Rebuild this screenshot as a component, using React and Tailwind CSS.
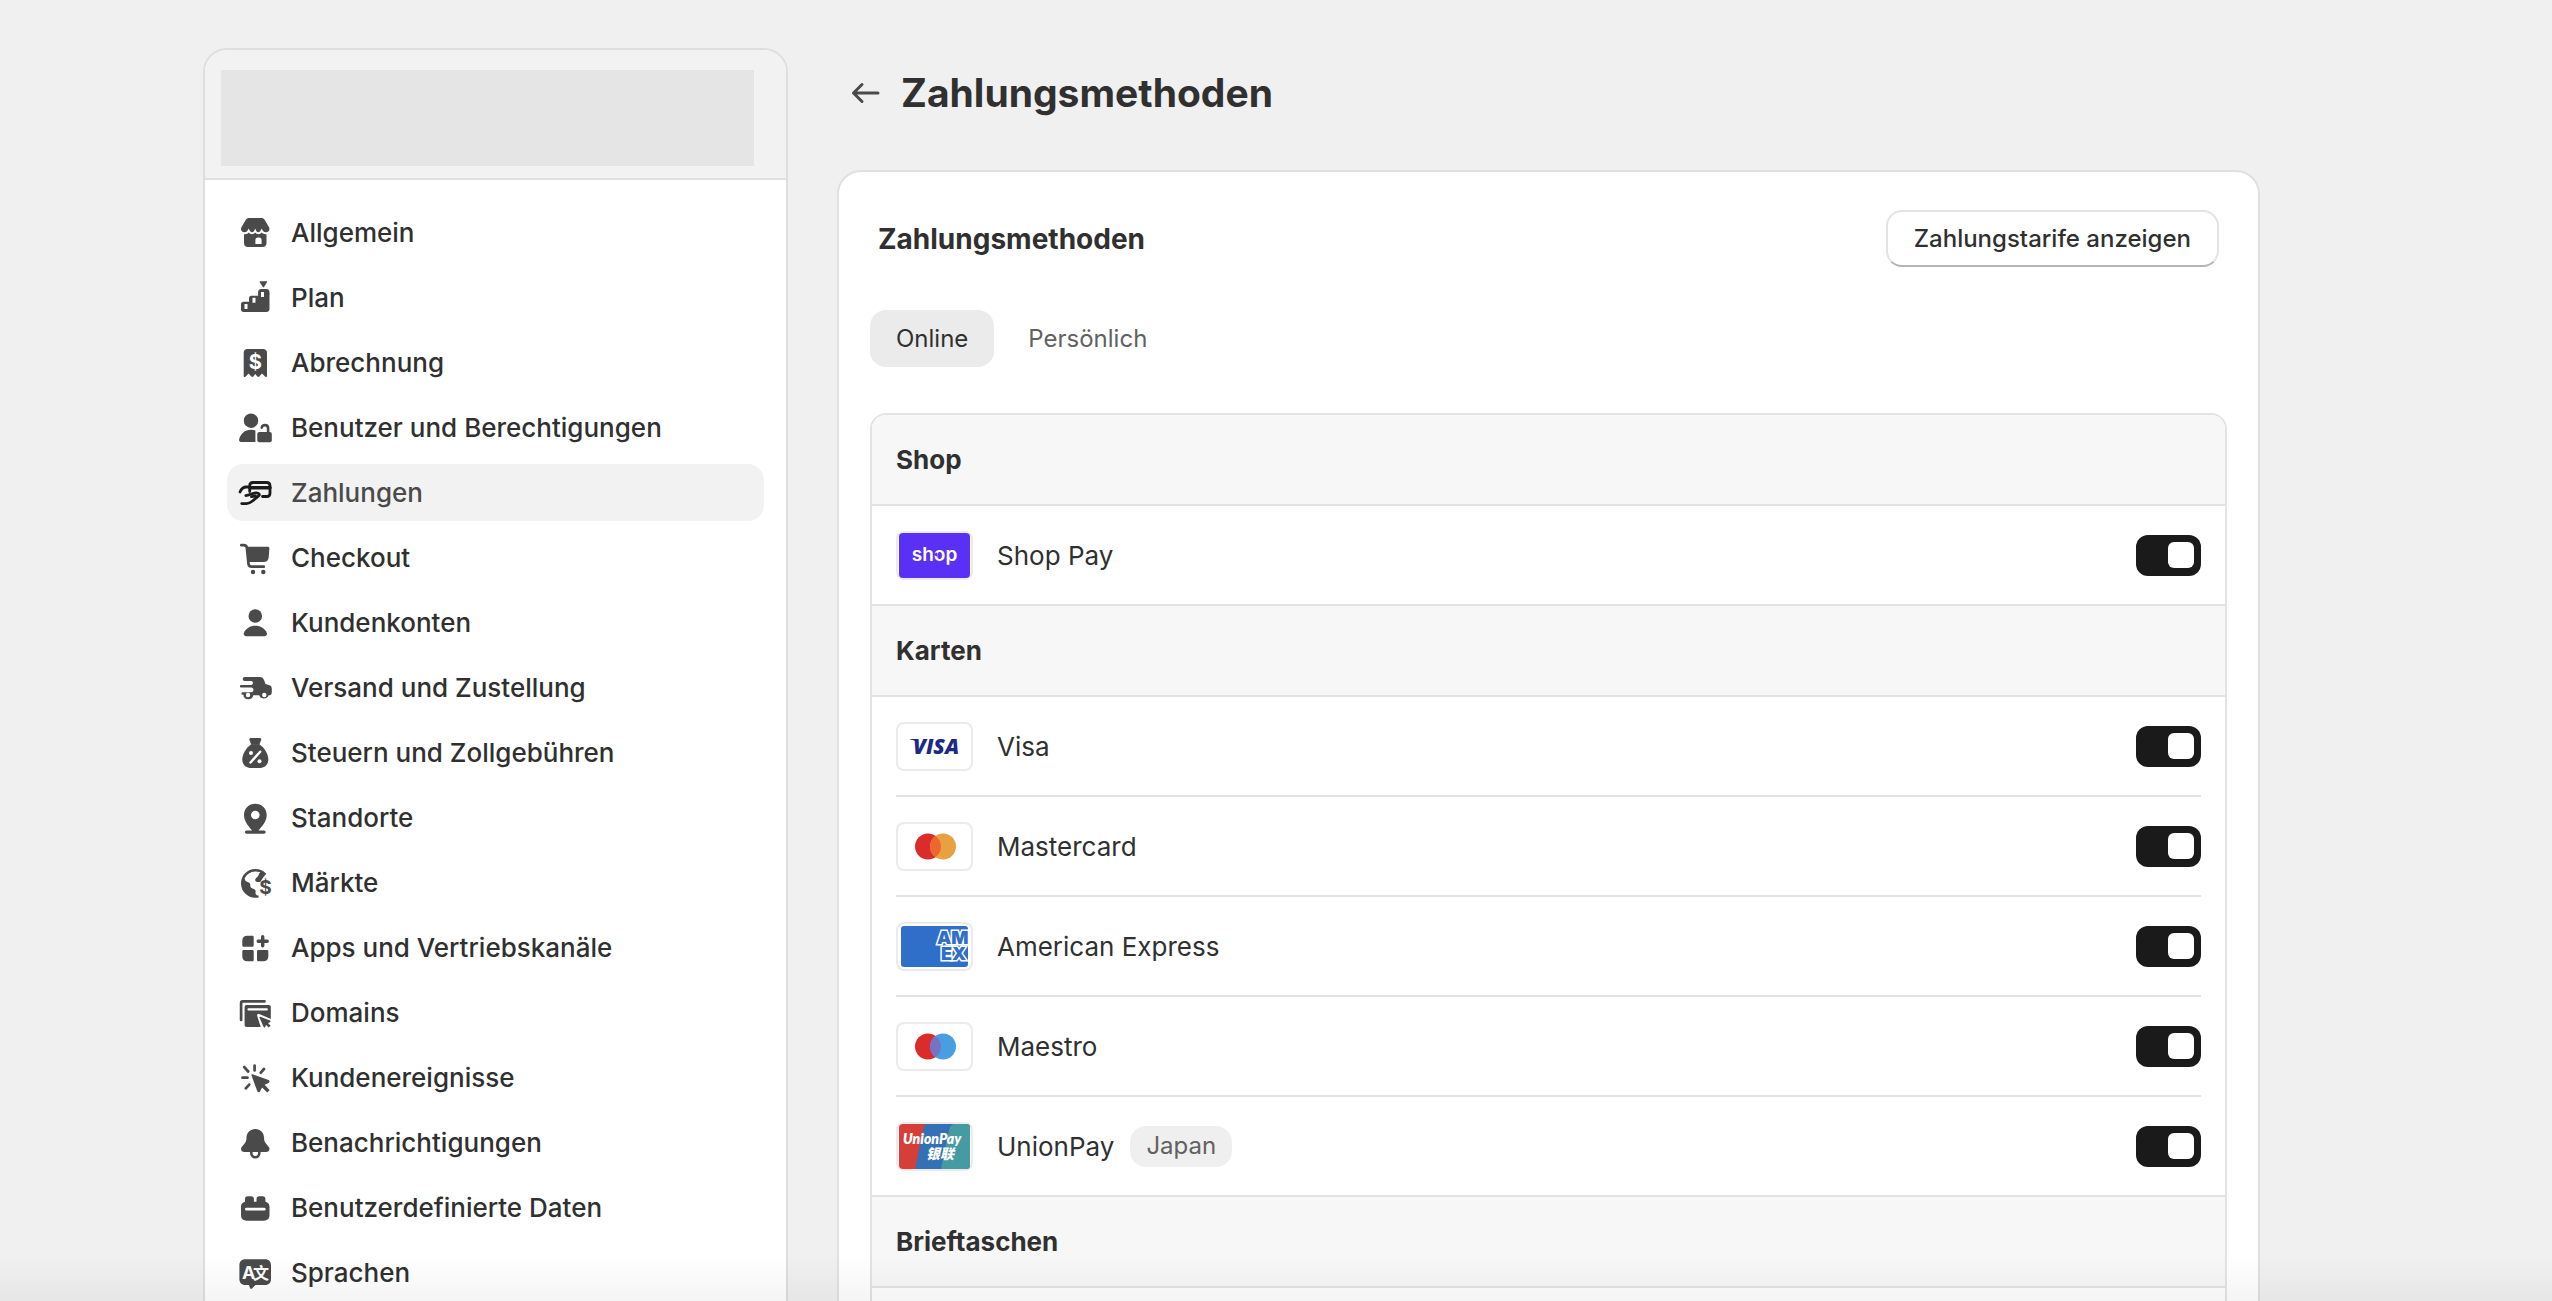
import { useState } from "react";
import clsx from "clsx";

const Icon = ({ children, className }) => (
  <svg
    viewBox="0 0 40 40"
    className={clsx("size-10 shrink-0", className)}
    fill="currentColor"
    aria-hidden="true"
  >
    {children}
  </svg>
);

const StoreIcon = () => (
  <Icon>
    <path d="M14 5h12.500c1.300 0 2.400.6 3.100 1.700l4.300 7.200c.4.700.6 1.300.6 2 0 1.900-1.500 3.300-3.500 3.300-2.400 0-3.300-1.400-4.300-3.700-.9 2.300-2 3.700-3.500 3.700s-2.200-1.400-3-3.700c-.8 2.300-1.600 3.700-3.100 3.700s-2.500-1.400-3.400-3.700c-1 2.300-2 3.700-4.300 3.700C7.400 19.200 6 17.800 6 15.900c0-.7.200-1.300.6-2l4.300-7.200C11.600 5.600 12.700 5 14 5Z" />
    <path
      fillRule="evenodd"
      d="M9 21.200c2.200.3 3.700-.4 4.700-1.600 1.800 2.200 4.700 2.200 6.500 0 1.800 2.200 4.700 2.200 6.500 0 1.200 1.200 2.700 1.900 4.800 1.600V30c0 2.500-1.500 4-4 4H13c-2.500 0-4-1.500-4-4v-8.800Zm14 3.300c-1.700 0-2.600 1-2.600 2.600V31h6.200v-3.900c0-1.600-1-2.600-2.600-2.600h-1Z"
    />
  </Icon>
);

const PlanIcon = () => (
  <Icon>
    <path d="M25.300 3.300h6.200c.5 0 .8.500.5.900l-3 4.800c-.3.400-.9.400-1.200 0l-3-4.800c-.3-.4 0-.9.500-.9Z" />
    <path
      fillRule="evenodd"
      d="M26.500 11h5c1.700 0 3 1.300 3 3v17c0 1.700-1.300 3-3 3H8.500C7 34 6 33 6 31.500v-5.300c0-1.500 1-2.500 2.500-2.500H14v-3.500c0-1.500 1-2.500 2.500-2.500h6.600V14c0-1.700 1.400-3 3.400-3ZM9.500 26v5h3v-5h-3Zm8-6.200v5h3v-5h-3ZM26 14v5h3v-5h-3Z"
    />
  </Icon>
);

const BillIcon = () => (
  <Icon>
    <path d="M12.500 6H28c2.400 0 4 1.600 4 4v23c0 1-1 1.400-1.700.7L27 30.500l-2.800 3c-.6.600-1.300.6-1.900 0l-2-2.500-2 2.500c-.6.600-1.300.6-1.900 0l-2.800-3-3.200 3.200c-.7.700-1.700.3-1.700-.7V10c0-2.400 1.400-4 3.800-4Z" />
    <text
      x="20.300"
      y="26"
      textAnchor="middle"
      className="fill-white font-['Inter',sans-serif] text-[20px] font-bold"
    >
      $
    </text>
  </Icon>
);

const UserLockIcon = () => (
  <Icon>
    <circle cx="16" cy="12.700" r="7.200" />
    <path d="M16 21.800c1.600 0 3.100.2 4.400.6V34H6c-1.300 0-2.200-1.100-1.900-2.300 1.200-5.800 5.900-9.900 11.900-9.900Z" />
    <rect x="22.300" y="24" width="14.500" height="10.200" rx="2" />
    <path
      d="M26.800 19.700c.2-1.600 1.400-2.600 3.100-2.600 1.900 0 3.200 1.200 3.200 3.100V25"
      fill="none"
      stroke="currentColor"
      strokeWidth="2.600"
      strokeLinecap="round"
    />
  </Icon>
);

const PaymentIcon = () => (
  <Icon className="text-[#1a1a1a]">
    <g
      fill="none"
      stroke="currentColor"
      strokeWidth="2.800"
      strokeLinecap="round"
      strokeLinejoin="round"
    >
      <path d="M14.700 18.500v-5.700c0-2 1.300-3.300 3.300-3.300h13.700c2 0 3.300 1.300 3.300 3.300v7.400c0 2-1.300 3.300-3.300 3.300h-4.200" />
      <path d="M15 14.700h20" strokeWidth="3.400" />
      <path d="M5 19c1.300-3.200 3.300-5 6.500-5h2" />
      <path d="M10.800 22.600c4 0 5.400-2.400 10.200-2.800 2.800-.2 4.400 1.800 2.400 3.400l-5.900 4.800c-2 1.600-3.500 2.600-6 2.600H6.700" />
      <path d="M16.500 23.700l4-.7" />
    </g>
  </Icon>
);

const CartIcon = () => (
  <Icon>
    <path d="M12 8.700h20.800c1 0 1.700.7 1.600 1.700l-.7 8.800c-.3 3.200-2 4.900-5.200 4.900H13.600L12 8.700Z" />
    <path
      d="M6.300 7.200h2.400c1.900 0 3 .9 3.200 2.700l1.600 15.900c.2 1.900 1.200 2.900 3.100 2.900h12.200"
      fill="none"
      stroke="currentColor"
      strokeWidth="2.700"
      strokeLinecap="round"
    />
    <circle cx="18" cy="34" r="2.200" />
    <circle cx="28.300" cy="34" r="2.200" />
  </Icon>
);

const PersonIcon = () => (
  <Icon>
    <circle cx="20.300" cy="13" r="6.800" />
    <path d="M20.300 22.700c5.200 0 9.700 2.700 11.500 7.200.6 1.700-.5 3.300-2.300 3.300H11.200c-1.800 0-2.900-1.600-2.300-3.300 1.800-4.500 6.200-7.200 11.400-7.200Z" />
  </Icon>
);

const TruckIcon = () => (
  <Icon>
    <path
      fillRule="evenodd"
      d="M9.700 9h14.800c2.700 0 3.800 1 4.700 3.500l1.300 3.600 3.300.9c2 .5 3 1.800 3 3.800v3.400c0 2-1 3.100-3 3.100h-.2a5 5 0 0 1-9.400 0h-5.900a5 5 0 0 1-9.900-.6H7.700a1.200 1.200 0 0 1 0-2.500h8.500c3 0 3-4.600 0-4.600H6.200a1.300 1.300 0 0 1 0-2.700H16c2.600 0 2.600-3.900 0-3.900H9.700a2 2 0 0 1 0-4ZM13 24.800a2.200 2.200 0 1 0 0 4.400 2.200 2.200 0 0 0 0-4.400Zm16.300 0a2.200 2.200 0 1 0 0 4.400 2.200 2.200 0 0 0 0-4.400Z"
    />
  </Icon>
);

const TaxIcon = () => (
  <Icon>
    <path d="M16 5h8.600c1.300 0 2 1 1.500 2.200l-1.800 4.600h-8L14.500 7.200C14 6 14.700 5 16 5Z" />
    <path d="M16.300 11.300h8c5.200 3.500 9 10 9 15.200 0 5.300-3.500 8.500-9 8.500h-8c-5.500 0-9-3.200-9-8.500 0-5.200 3.800-11.700 9-15.200Z" />
    <g stroke="white" fill="white">
      <path
        d="M15.500 29.500l9.700-10.800"
        strokeWidth="2.400"
        strokeLinecap="round"
      />
      <circle cx="16" cy="20" r="2" strokeWidth="0" />
      <circle cx="24.500" cy="28.300" r="2" strokeWidth="0" />
    </g>
  </Icon>
);

const LocationIcon = () => (
  <Icon>
    <path
      fillRule="evenodd"
      d="M20.300 5.700c6.400 0 11.400 4.800 11.400 11.200 0 6.200-4.500 11-8.200 15.500h5.500a1.700 1.700 0 0 1 0 3.400H11.600a1.700 1.700 0 0 1 0-3.400h5.500C13.400 27.900 9 23.100 9 16.900 9 10.500 13.900 5.700 20.300 5.700Zm0 7a4.300 4.300 0 1 0 0 8.600 4.300 4.300 0 0 0 0-8.600Z"
    />
  </Icon>
);

const MarketsIcon = () => (
  <Icon>
    <path
      fillRule="evenodd"
      d="M20.300 6c4.400 0 8.300 1.800 11 4.800l-2.600 3-3.500 5.300h-3c-1 0-2-.9-2-2 0-1.500 1.200-2.200 2.300-3.300 1.700-1.700 1-3 2.800-4.500-1.500-.6-3.200-.9-5-.9-4.800 0-8.900 2.900-10.700 7.200l.9 2.400c1 1 3.300.8 4.300 2.300 1 1.600 0 3.300 1.300 4.400 1.500 1.100 4.200 1 4.500 3.300.2 1.400-.6 2.200.3 3.200.6.800 1.500 1.500 2.700 1.300v2c-1 .2-2 .3-3.300.3A14.300 14.300 0 0 1 6 20.400C6 12.400 12.300 6 20.300 6Z"
    />
    <text
      x="30.600"
      y="31"
      textAnchor="middle"
      className="font-['Inter',sans-serif] text-[19px] font-bold"
    >
      $
    </text>
  </Icon>
);

const AppsIcon = () => (
  <Icon>
    <path d="M12.300 7.700h4.900c1 0 1.500.5 1.500 1.500v8c0 1-.5 1.500-1.500 1.500h-8.400c-1 0-1.500-.5-1.500-1.500v-4.500c0-3.200 1.800-5 5-5Z" />
    <path d="M8.800 22h8.400c1 0 1.500.5 1.500 1.500v8.300c0 1-.5 1.500-1.500 1.500h-4.900c-3.200 0-5-1.800-5-5v-4.800c0-1 .5-1.500 1.500-1.500Z" />
    <path d="M23.500 22h8.300c1 0 1.500.5 1.500 1.500v4.800c0 3.200-1.800 5-5 5h-4.800c-1 0-1.500-.5-1.500-1.500v-8.300c0-1 .5-1.500 1.500-1.500Z" />
    <path
      d="M27.700 8.700v9M23.200 13.200h9"
      stroke="currentColor"
      strokeWidth="3.400"
      strokeLinecap="round"
    />
  </Icon>
);

const DomainsIcon = () => (
  <Icon>
    <path
      d="M29.500 8.400H7.700c-1 0-1.600.6-1.600 1.600v17"
      fill="none"
      stroke="currentColor"
      strokeWidth="2.700"
      strokeLinecap="round"
    />
    <path d="M11.600 12h22.200c1.200 0 2 .8 2 2v18c0 1.200-.8 2-2 2H11.600c-1.200 0-2-.8-2-2V14c0-1.200.8-2 2-2Z" />
    <path
      d="M13.500 16.400h18.300"
      stroke="white"
      strokeWidth="2.200"
      strokeLinecap="round"
    />
    <path
      d="M23.600 22.400l4 12.600h9V27.800Z"
      fill="white"
      stroke="white"
      strokeWidth="3"
      strokeLinejoin="round"
    />
    <path d="M25.200 23.700l9.800 3.900c.8.300.8 1.300 0 1.600l-2 .9 2.600 2.700-1.800 1.800-2.700-2.700-1 2c-.4.800-1.400.7-1.600-.1l-4-9.300c-.2-.5.200-1 .7-.8Z" />
  </Icon>
);

const EventsIcon = () => (
  <Icon>
    <path d="M17.500 16.200l16 5.900c1.400.5 1.400 2.200.1 2.800l-3.900 1.900 4.900 5.400-2.300 2.200-5.200-5-2.100 4c-.6 1.200-2.300 1.100-2.700-.2l-5.800-15.700c-.3-.8.200-1.500 1-1.300Z" />
    <path
      d="M19.600 7.500v5M9.200 9l4 4.500M29 11l-3.200 3.700M7.500 19.700h5M14.200 26.600l-3.400 3.700"
      stroke="currentColor"
      strokeWidth="2.700"
      strokeLinecap="round"
      fill="none"
    />
  </Icon>
);

const BellIcon = () => (
  <Icon>
    <path d="M20.300 6c5 0 8.700 3.700 8.700 8.600 0 3.700 1 5.400 4 8.400 1 1 1.500 2 1.500 3 0 1.800-1.400 3-3.500 3H9.500C7.400 29 6 27.800 6 26c0-1 .5-2 1.500-3 3-3 4-4.700 4-8.400C11.500 9.700 15.300 6 20.300 6Z" />
    <path
      d="M16.300 28.500v1.600c0 2.400 1.700 4.200 4 4.200s4-1.800 4-4.200v-1.600"
      fill="none"
      stroke="currentColor"
      strokeWidth="2.600"
    />
  </Icon>
);

const DataIcon = () => (
  <Icon>
    <path d="M10 13.700v-2.600c0-1.800 1-2.800 2.700-2.800h3.500c1.700 0 2.700 1 2.700 2.800v2.600h2.600v-2.600c0-1.800 1-2.800 2.700-2.800h3.500c1.700 0 2.700 1 2.700 2.800v2.600c2.700.6 4.100 2.300 4.100 5v8.300c0 3.600-2.100 5.700-5.700 5.700H11.700C8.100 32.700 6 30.600 6 27v-8.300c0-2.700 1.400-4.400 4-5Z" />
    <path
      d="M11.400 21.200h17.800"
      stroke="white"
      strokeWidth="2.800"
      strokeLinecap="round"
    />
  </Icon>
);

const LanguageIcon = () => (
  <Icon>
    <path d="M10.400 6.300H30c3.800 0 6 2.200 6 6V26c0 3.800-2.200 6-6 6h-9.500l-3.300 3.300c-1 1-1.900.8-2.300-.5L14 32h-3.600c-3.800 0-6-2.200-6-6V12.300c0-3.800 2.200-6 6-6Z" />
    <text
      x="13.700"
      y="25.500"
      textAnchor="middle"
      className="fill-white font-['Inter',sans-serif] text-[18px] font-bold"
    >
      A
    </text>
    <text
      x="26"
      y="25.500"
      textAnchor="middle"
      className="fill-white font-['Noto_Sans_CJK_SC',sans-serif] text-[16px] font-bold"
    >
      文
    </text>
  </Icon>
);

const navItems = [
  { label: "Allgemein", icon: StoreIcon },
  { label: "Plan", icon: PlanIcon },
  { label: "Abrechnung", icon: BillIcon },
  { label: "Benutzer und Berechtigungen", icon: UserLockIcon },
  { label: "Zahlungen", icon: PaymentIcon, active: true },
  { label: "Checkout", icon: CartIcon },
  { label: "Kundenkonten", icon: PersonIcon },
  { label: "Versand und Zustellung", icon: TruckIcon },
  { label: "Steuern und Zollgebühren", icon: TaxIcon },
  { label: "Standorte", icon: LocationIcon },
  { label: "Märkte", icon: MarketsIcon },
  { label: "Apps und Vertriebskanäle", icon: AppsIcon },
  { label: "Domains", icon: DomainsIcon },
  { label: "Kundenereignisse", icon: EventsIcon },
  { label: "Benachrichtigungen", icon: BellIcon },
  { label: "Benutzerdefinierte Daten", icon: DataIcon },
  { label: "Sprachen", icon: LanguageIcon },
];

const Logo = ({ children }) => (
  <svg
    viewBox="0 0 77 49"
    className="h-[49px] w-[77px] shrink-0"
    aria-hidden="true"
  >
    <rect
      x="1"
      y="1"
      width="75"
      height="47"
      rx="7"
      fill="white"
      stroke="#ebebeb"
      strokeWidth="2"
    />
    {children}
  </svg>
);

const ShopPayLogo = () => (
  <Logo>
    <rect x="3" y="2" width="71" height="45" rx="4" fill="#5a31f4" />
    <text
      x="38.500"
      y="30"
      textAnchor="middle"
      className="fill-white font-['Inter',sans-serif] text-[19px] font-semibold"
    >
      shop
    </text>
    <path d="M36.500 23.500l4.500-2v4Z" fill="#5a31f4" />
  </Logo>
);

const VisaLogo = () => (
  <Logo>
    <text
      x="17"
      y="32"
      className="fill-[#1a2a86] font-['Open_Sans',sans-serif] text-[21px] font-extrabold italic"
    >
      VISA
    </text>
    <path d="M14 17h7l1.500 4c-2-2-5-3.300-8.500-3.600Z" fill="#1a2a86" />
  </Logo>
);

const MastercardLogo = () => (
  <Logo>
    <circle cx="32" cy="24.500" r="13" fill="#da2c2a" />
    <circle cx="47" cy="24.500" r="13" fill="#e9a13f" />
    <path d="M39.500 13.900a13 13 0 0 1 0 21.200 13 13 0 0 1 0-21.200Z" fill="#ec672d" />
  </Logo>
);

const AmexLogo = () => (
  <Logo>
    <clipPath id="amex-card">
      <rect x="5" y="4" width="67" height="41" rx="3" />
    </clipPath>
    <rect x="5" y="4" width="67" height="41" rx="3" fill="#2f6ec9" />
    <g
      clipPath="url(#amex-card)"
      className="font-['Inter',sans-serif] font-black"
      fill="#2f6ec9"
      stroke="white"
      strokeWidth="3"
      strokeLinejoin="miter"
      paintOrder="stroke"
    >
      <text x="41" y="22" fontSize="18">
        AM
      </text>
      <text x="45" y="38" fontSize="18">
        EX
      </text>
    </g>
  </Logo>
);

const MaestroLogo = () => (
  <Logo>
    <circle cx="32" cy="24.500" r="13" fill="#da2c2a" />
    <circle cx="47" cy="24.500" r="13" fill="#479fe2" />
    <path d="M39.500 13.900a13 13 0 0 1 0 21.200 13 13 0 0 1 0-21.200Z" fill="#7673c4" />
  </Logo>
);

const UnionPayLogo = () => (
  <Logo>
    <clipPath id="unionpay-card">
      <rect x="3" y="2" width="71" height="45" rx="4" />
    </clipPath>
    <g clipPath="url(#unionpay-card)">
      <rect x="3" y="2" width="71" height="45" fill="#d63f38" />
      <path d="M31 2h43v45H19.500c0-2 0-3 .5-5l7.500-36c.6-2.500 1.500-3.500 3.500-4Z" fill="#3470b6" />
      <path d="M58 2h16v45H45.500c0-3 0-4 .6-6l7-33c.8-3.500 2-5.500 4.900-6Z" fill="#459ba1" />
    </g>
    <text
      x="7"
      y="22"
      className="fill-white font-['Lato',sans-serif] text-[14px] font-extrabold italic"
    >
      UnionPay
    </text>
    <text
      x="30"
      y="37"
      className="fill-white font-['Noto_Sans_CJK_SC',sans-serif] text-[14px] font-black italic"
    >
      银联
    </text>
  </Logo>
);

const sections = [
  {
    title: "Shop",
    methods: [{ name: "Shop Pay", logo: ShopPayLogo }],
  },
  {
    title: "Karten",
    methods: [
      { name: "Visa", logo: VisaLogo },
      { name: "Mastercard", logo: MastercardLogo },
      { name: "American Express", logo: AmexLogo },
      { name: "Maestro", logo: MaestroLogo },
      { name: "UnionPay", logo: UnionPayLogo, region: "Japan" },
    ],
  },
  {
    title: "Brieftaschen",
    methods: [],
  },
];

const Sidebar = () => (
  <aside className="flex w-[585px] shrink-0 flex-col overflow-hidden rounded-t-3xl border-2 border-b-0 border-[#dedede] bg-white">
    <div className="border-b-2 border-[#e0e0e0] bg-[#f2f2f2] pt-5 pr-8 pb-3 pl-4">
      <div className="h-24 bg-[#e5e5e5]" />
    </div>
    <nav className="px-[22px] pt-6">
      <ul className="flex flex-col gap-2">
        {navItems.map(({ label, icon: ItemIcon, active }) => (
          <li key={label}>
            <a
              href="#"
              aria-current={active ? "page" : undefined}
              className={clsx(
                "flex h-[57px] items-center gap-4 rounded-2xl px-2 text-[26px] font-medium",
                active ? "bg-[#f2f2f2] text-[#4a4a4a]" : "text-[#303030]"
              )}
            >
              <span className="text-[#4a4a4a]">
                <ItemIcon />
              </span>
              {label}
            </a>
          </li>
        ))}
      </ul>
    </nav>
  </aside>
);

const MethodRow = ({ name, logo: MethodLogo, region, enabled, onToggle }) => {
  const id = `method-${name.toLowerCase().replace(" ", "-")}`;

  return (
    <li className="mx-6 flex h-[100px] items-center gap-6 border-b-2 border-[#e3e3e3] last:mx-0 last:px-6">
      <MethodLogo />
      <div className="flex flex-1 items-center gap-4">
        <label htmlFor={id} className="text-[26px]">
          {name}
        </label>
        {region && (
          <span className="flex h-[41px] items-center rounded-2xl bg-[#efefef] px-4 text-2xl text-[#616161]">
            {region}
          </span>
        )}
      </div>
      <input
        id={id}
        type="checkbox"
        role="switch"
        checked={enabled}
        onChange={onToggle}
        className="flex h-[41px] w-[65px] shrink-0 cursor-pointer appearance-none items-center rounded-xl bg-[#8a8a8a] px-[7px] before:size-[26px] before:rounded-md before:bg-white checked:justify-end checked:bg-[#1a1a1a]"
      />
    </li>
  );
};

const App = () => {
  const [tab, setTab] = useState("Online");
  const [disabled, setDisabled] = useState([]);

  const toggleMethod = (name) => {
    setDisabled((prev) =>
      prev.includes(name) ? prev.filter((n) => n !== name) : [...prev, name]
    );
  };

  return (
    <div className="relative flex h-screen gap-[49px] overflow-hidden bg-[#f0f0f0] pt-12 pr-[292px] pl-[203px] font-['Inter',sans-serif] text-[#303030]">
      <Sidebar />

      <main className="flex min-w-0 flex-1 flex-col">
        {/* Page header */}
        <div className="flex h-[122px] shrink-0 items-center gap-4 pb-8 pl-2">
          <button aria-label="Zurück" className="text-[#4a4a4a]">
            <Icon>
              <path
                d="M33 20H8.500M17 11.500L8.500 20l8.500 8.500"
                fill="none"
                stroke="currentColor"
                strokeWidth="3"
                strokeLinecap="round"
                strokeLinejoin="round"
              />
            </Icon>
          </button>
          <h1 className="text-[39px] font-bold">Zahlungsmethoden</h1>
        </div>

        <section className="flex-1 rounded-t-3xl border-2 border-b-0 border-[#e0e0e0] bg-white px-[31px] pt-[38px]">
          <div className="flex items-center justify-between px-2">
            <h2 className="text-[28px] font-bold">Zahlungsmethoden</h2>
            <button className="h-[57px] rounded-2xl border-2 border-[#e3e3e3] border-b-[#b5b5b5] px-[26px] text-2xl font-medium">
              Zahlungstarife anzeigen
            </button>
          </div>

          {/* Tabs */}
          <div role="tablist" className="mt-[43px] flex gap-2">
            {["Online", "Persönlich"].map((name) => (
              <button
                key={name}
                role="tab"
                aria-selected={tab === name}
                onClick={() => setTab(name)}
                className={clsx(
                  "h-[57px] rounded-2xl px-[26px] text-2xl",
                  tab === name ? "bg-[#ebebeb]" : "text-[#616161]"
                )}
              >
                {name}
              </button>
            ))}
          </div>

          {/* Payment methods */}
          <div className="mt-[46px] h-full overflow-hidden rounded-t-2xl border-2 border-b-0 border-[#e3e3e3]">
            {sections.map((section) => (
              <div key={section.title}>
                <h3 className="flex h-[91px] items-center border-b-2 border-[#e3e3e3] bg-[#f7f7f7] px-6 text-[26px] font-bold">
                  {section.title}
                </h3>
                <ul>
                  {section.methods.map((method) => (
                    <MethodRow
                      key={method.name}
                      {...method}
                      enabled={!disabled.includes(method.name)}
                      onToggle={() => toggleMethod(method.name)}
                    />
                  ))}
                </ul>
              </div>
            ))}
          </div>
        </section>
      </main>

      {/* Fade at the bottom edge of the window */}
      <div className="pointer-events-none absolute inset-x-0 bottom-0 h-12 bg-linear-to-b from-transparent to-black/4" />
    </div>
  );
};

export default App;
